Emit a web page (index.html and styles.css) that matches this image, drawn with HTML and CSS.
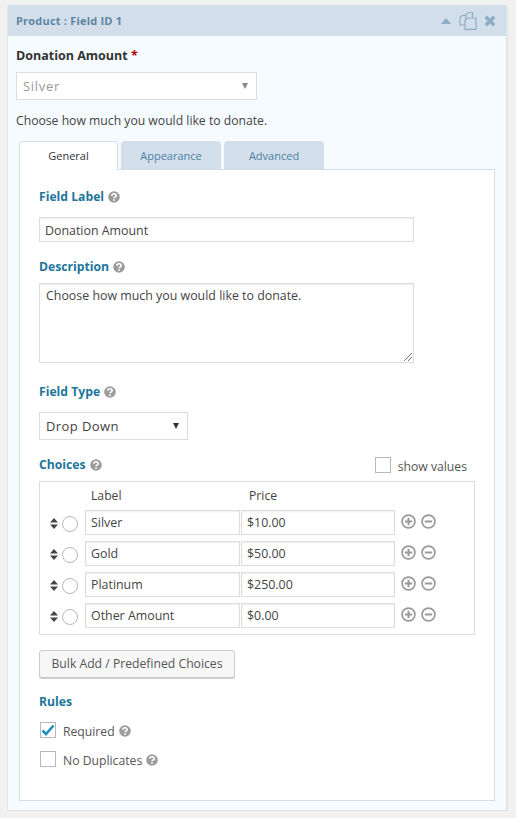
FILE: index.html
```html
<!DOCTYPE html>
<html lang="en">
<head>
    <meta charset="UTF-8">
    <title>Product : Field ID 1</title>
    <link rel="stylesheet" href="styles.css">
</head>
<body>
    <svg class="defs" width="0" height="0">
        <symbol id="help" viewBox="0 0 12 12">
            <circle cx="6" cy="6" r="5.8" fill="#9c9c9c"/>
            <path d="M3.9 4.7c0-2.7 4.2-2.7 4.2 0 0 1.5-2.1 1.4-2.1 2.6" fill="none" stroke="#fff" stroke-width="1.6"/>
            <rect x="5.2" y="8.3" width="1.6" height="1.6" fill="#fff"/>
        </symbol>
        <symbol id="updown" viewBox="0 0 8 11">
            <path d="M4 0l4 4.5H0zM0 6.5h8L4 11z" fill="#444"/>
        </symbol>
        <symbol id="plus" viewBox="0 0 15 15">
            <circle cx="7.5" cy="7.5" r="6.4" fill="none" stroke="#999" stroke-width="1.7"/>
            <path d="M3.8 7.5h7.4M7.5 3.8v7.4" stroke="#999" stroke-width="2"/>
        </symbol>
        <symbol id="minus" viewBox="0 0 15 15">
            <circle cx="7.5" cy="7.5" r="6.4" fill="none" stroke="#999" stroke-width="1.7"/>
            <path d="M3.8 7.5h7.4" stroke="#999" stroke-width="2"/>
        </symbol>
    </svg>

    <div class="panel">
        <div class="panel-head">
            <span class="panel-title">Product : Field ID 1</span>
            <div class="panel-icons">
                <svg class="icon-up" viewBox="0 0 10 6"><path d="M5 0l5 6H0z" fill="#8fadc2"/></svg>
                <svg class="icon-copy" viewBox="0 0 18 18">
                    <path d="M7 10V2.5L9 .7h4.5v5" fill="none" stroke="#8fadc2" stroke-width="1.1"/>
                    <path d="M1 5.5L3.2 3.5H7M1 5.5v7.5h4.5" fill="none" stroke="#8fadc2" stroke-width="1.1"/>
                    <path d="M6 8.5L8.5 6H17v11.3H6z" fill="#d2dfea" stroke="#8fadc2" stroke-width="1.2"/>
                </svg>
                <svg class="icon-close" viewBox="0 0 12 12"><path d="M1.8 1.8l8.4 8.4M10.2 1.8l-8.4 8.4" stroke="#8fadc2" stroke-width="3.6"/></svg>
            </div>
        </div>
        <div class="panel-body">
            <div class="preview-label">Donation Amount <span class="req">*</span></div>
            <div class="select preview-select">Silver<span class="arrow grey"></span></div>
            <div class="preview-desc">Choose how much you would like to donate.</div>

            <div class="tabs">
                <div class="tab active">General</div>
                <div class="tab">Appearance</div>
                <div class="tab">Advanced</div>
            </div>
            <div class="tab-box">
                <div class="field-title">Field Label <svg class="help"><use href="#help"/></svg></div>
                <div class="input label-input">Donation Amount</div>

                <div class="field-title desc-title">Description <svg class="help"><use href="#help"/></svg></div>
                <div class="input textarea">
                    Choose how much you would like to donate.
                    <svg class="grip" viewBox="0 0 9 9"><path d="M1 9l8-8M5 9l4-4" stroke="#777" stroke-width="1"/></svg>
                </div>

                <div class="field-title type-title">Field Type <svg class="help"><use href="#help"/></svg></div>
                <div class="select type-select">Drop Down<span class="arrow"></span></div>

                <div class="choices-head">
                    <div class="field-title">Choices <svg class="help"><use href="#help"/></svg></div>
                    <label class="show-values"><span class="check"></span><span class="show-text">show values</span></label>
                </div>
                <div class="choices">
                    <div class="choice-cols"><span>Label</span><span>Price</span></div>
                    <div class="choice">
                        <svg class="sort"><use href="#updown"/></svg><span class="radio"></span>
                        <div class="input cell-label">Silver</div><div class="input cell-price">$10.00</div>
                        <svg class="round first"><use href="#plus"/></svg><svg class="round"><use href="#minus"/></svg>
                    </div>
                    <div class="choice">
                        <svg class="sort"><use href="#updown"/></svg><span class="radio"></span>
                        <div class="input cell-label">Gold</div><div class="input cell-price">$50.00</div>
                        <svg class="round first"><use href="#plus"/></svg><svg class="round"><use href="#minus"/></svg>
                    </div>
                    <div class="choice">
                        <svg class="sort"><use href="#updown"/></svg><span class="radio"></span>
                        <div class="input cell-label">Platinum</div><div class="input cell-price">$250.00</div>
                        <svg class="round first"><use href="#plus"/></svg><svg class="round"><use href="#minus"/></svg>
                    </div>
                    <div class="choice">
                        <svg class="sort"><use href="#updown"/></svg><span class="radio"></span>
                        <div class="input cell-label">Other Amount</div><div class="input cell-price">$0.00</div>
                        <svg class="round first"><use href="#plus"/></svg><svg class="round"><use href="#minus"/></svg>
                    </div>
                </div>

                <div class="bulk-btn">Bulk Add / Predefined Choices</div>

                <div class="field-title rules-title">Rules</div>
                <label class="rule">
                    <span class="check">
                        <svg class="tick" viewBox="0 0 14 12"><path d="M1.5 6.5l3.5 3.5 7.5-8.5" fill="none" stroke="#1e8cbe" stroke-width="2.6"/></svg>
                    </span>Required <svg class="help"><use href="#help"/></svg>
                </label>
                <label class="rule">
                    <span class="check"></span>No Duplicates <svg class="help"><use href="#help"/></svg>
                </label>
            </div>
        </div>
    </div>
</body>
</html>
```

FILE: styles.css
```css
body {
    margin: 0;
    background-color: #f1f1f1;
    font-family: "Open Sans", "Noto Sans", sans-serif;
    font-size: 12.2px;
    color: #444;
}
.defs {
    position: absolute;
}
.panel {
    width: 499px;
    height: 806px;
    margin: 5px 0 0 8px;
    box-sizing: border-box;
    background-color: #f6fbff;
    border-right: 1px solid #dbe5ee;
    border-bottom: 1px solid #d8dfe5;
    box-shadow: 0 1px 2px rgba(0, 0, 0, 0.12);
}
.panel-head {
    height: 31px;
    background-color: #d2dfea;
    display: flex;
    justify-content: space-between;
    align-items: center;
    padding: 0 10px 0 8px;
}
.panel-title {
    color: #5e85a3;
    font-size: 11px;
    font-weight: 700;
    letter-spacing: 0.2px;
}
.panel-icons {
    display: flex;
    align-items: center;
}
.icon-up {
    width: 10px;
    height: 6px;
    margin-right: 8px;
}
.icon-copy {
    width: 18px;
    height: 18px;
    margin-right: 7px;
}
.icon-close {
    width: 12px;
    height: 12px;
}
.panel-body {
    padding: 10px 12px 0 8px;
}
.preview-label {
    font-size: 12.5px;
    font-weight: 700;
    color: #333;
    line-height: 20px;
}
.req {
    color: #a00;
}
.select {
    position: relative;
    box-sizing: border-box;
    background-color: #fff;
    border: 1px solid #ddd;
    padding-left: 6px;
    display: flex;
    align-items: center;
    letter-spacing: 0.4px;
}
.preview-select {
    width: 241px;
    height: 28px;
    margin-top: 6px;
    color: #999;
    font-size: 13px;
    letter-spacing: 0.7px;
}
.arrow {
    position: absolute;
    right: 8px;
    top: 50%;
    margin-top: -3px;
    border-left: 3.5px solid transparent;
    border-right: 3.5px solid transparent;
    border-top: 6px solid #333;
}
.arrow.grey {
    border-top-color: #888;
}
.preview-desc {
    margin-top: 11px;
    line-height: 20px;
}
.tabs {
    display: flex;
    gap: 3px;
    margin: 10px 0 0 3px;
}
.tab {
    width: 100px;
    height: 28px;
    box-sizing: border-box;
    background-color: #d2dfea;
    border-radius: 4px 4px 0 0;
    color: #4f80a5;
    font-size: 11px;
    text-align: center;
    line-height: 30px;
}
.tab.active {
    width: 99px;
    height: 29px;
    margin-bottom: -1px;
    background-color: #fff;
    border: 1px solid #d2dfea;
    border-bottom: none;
    color: #333;
    line-height: 28px;
    position: relative;
    z-index: 1;
}
.tab-box {
    box-sizing: border-box;
    width: 476px;
    height: 632px;
    margin-left: 3px;
    padding: 18px 19px 0 19px;
    background-color: #fff;
    border: 1px solid #d2dfea;
}
.field-title {
    color: #21759b;
    font-size: 12.2px;
    font-weight: 700;
    line-height: 18px;
    display: flex;
    align-items: center;
    gap: 4px;
}
.help {
    width: 12px;
    height: 12px;
}
.input {
    box-sizing: border-box;
    background-color: #fff;
    border: 1px solid #ddd;
    box-shadow: inset 0 1px 2px rgba(0, 0, 0, 0.07);
    padding-left: 5px;
    color: #444;
    font-size: 12.4px;
}
.label-input {
    width: 375px;
    height: 25px;
    margin-top: 11px;
    line-height: 25px;
}
.desc-title {
    margin-top: 16px;
}
.textarea {
    position: relative;
    width: 375px;
    height: 80px;
    margin-top: 7px;
    padding-left: 6px;
    padding-top: 3px;
    line-height: 18px;
}
.grip {
    position: absolute;
    right: 1px;
    bottom: 1px;
    width: 9px;
    height: 9px;
}
.type-title {
    margin-top: 20px;
}
.type-select {
    width: 149px;
    height: 28px;
    margin-top: 11px;
    color: #444;
    font-size: 13px;
}
.choices-head {
    display: flex;
    justify-content: space-between;
    align-items: center;
    margin-top: 16px;
    padding-right: 8px;
}
.show-values {
    display: flex;
    align-items: center;
    color: #555;
}
.show-text {
    margin-top: 3px;
    line-height: 14px;
}
.check {
    box-sizing: border-box;
    width: 16px;
    height: 16px;
    background-color: #fff;
    border: 1px solid #b4b9be;
    margin-right: 7px;
    display: flex;
    align-items: center;
    justify-content: center;
}
.choices {
    box-sizing: border-box;
    width: 436px;
    height: 154px;
    margin-top: 7px;
    padding: 5px 0 0 10px;
    border: 1px solid #ddd;
}
.choice-cols {
    display: flex;
    height: 23px;
    line-height: 18px;
    padding-left: 41px;
    color: #444;
}
.choice-cols span:first-child {
    width: 158px;
}
.choice {
    display: flex;
    align-items: center;
    height: 25px;
    margin-bottom: 6px;
}
.sort {
    width: 8px;
    height: 11px;
    margin-top: 2px;
}
.radio {
    box-sizing: border-box;
    width: 16px;
    height: 16px;
    margin: 3px 7px 0 4px;
    background-color: #fff;
    border: 1px solid #b4b9be;
    border-radius: 50%;
}
.cell-label {
    width: 155px;
    height: 25px;
    line-height: 23px;
}
.cell-price {
    width: 154px;
    height: 25px;
    line-height: 23px;
    margin-left: 1px;
}
.round {
    width: 15px;
    height: 15px;
    margin-top: -2px;
    margin-left: 5px;
}
.round.first {
    margin-left: 6px;
}
.bulk-btn {
    box-sizing: border-box;
    width: 196px;
    height: 28px;
    margin-top: 15px;
    background-color: #f7f7f7;
    border: 1px solid #ccc;
    border-radius: 3px;
    box-shadow: 0 1px 0 #ccc;
    color: #555;
    text-align: center;
    line-height: 26px;
}
.rules-title {
    margin-top: 15px;
}
.rule {
    display: flex;
    align-items: center;
    margin-top: 11px;
    margin-left: 1px;
    color: #555;
    height: 18px;
}
.rule .check {
    margin-top: -2px;
}
.rule .help {
    margin-left: 4px;
}
.tick {
    width: 14px;
    height: 12px;
}
```
